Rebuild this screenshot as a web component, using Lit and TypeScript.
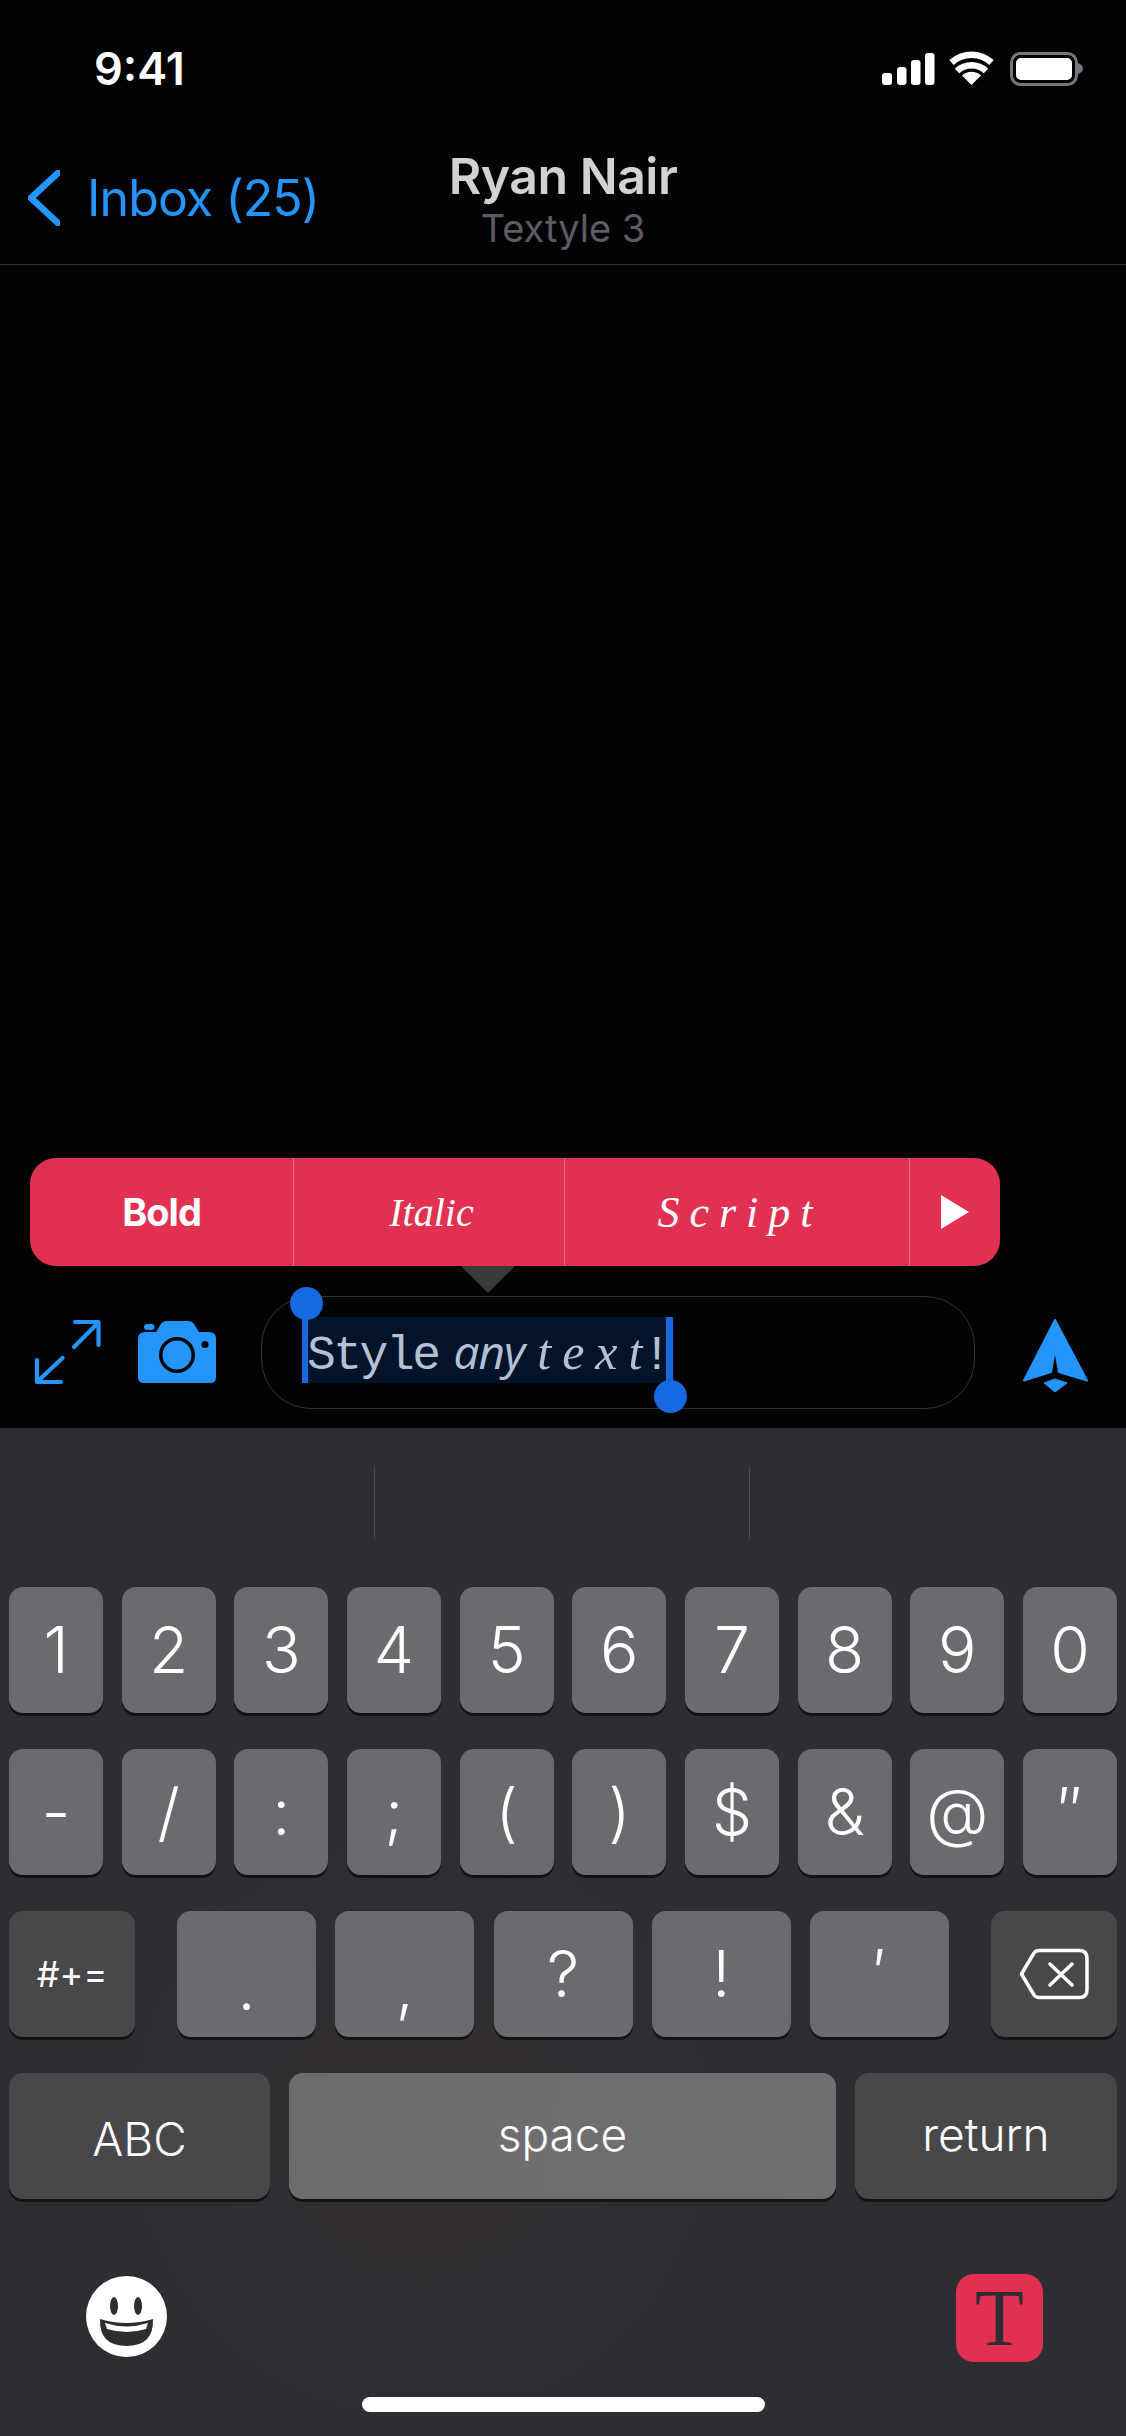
import { LitElement, html, css, svg } from "lit";
import { customElement } from "lit/decorators.js";

const rows1 = ["1","2","3","4","5","6","7","8","9","0"];
const rows2 = ["-","/",":",";","(",")","$","&","@","\u2033"];
const rows3 = [".",",","?","!","\u2032"];

@customElement("app-root")
export class AppRoot extends LitElement {
  static styles = css`
    :host { display: block; width: 1126px; height: 2436px; background: #030306; overflow: hidden; font-family: Inter, "Liberation Sans", sans-serif; color: #fff; }
    .page { display: flex; flex-direction: column; height: 2436px; }
    .status { height: 140px; flex: none; display: flex; justify-content: space-between; align-items: flex-start; padding: 0 43px 0 94px; box-sizing: border-box; }
    .time { font-size: 45px; font-weight: 600; line-height: 44px; margin-top: 47px; }
    .status svg { display: block; margin-top: 51px; }
    .nav { height: 125px; flex: none; box-sizing: border-box; border-bottom: 1px solid #2e2e31; display: grid; grid-template-columns: 1fr auto 1fr; }
    .back { display: flex; align-items: flex-start; color: #2395fb; font-size: 50px; line-height: 60px; padding: 28px 0 0 28px; gap: 27px; letter-spacing: -0.9px; }
    .back svg { display: block; margin-top: 2px; }
    .title { text-align: center; }
    .name { font-size: 50px; font-weight: 600; line-height: 60px; color: #d2d2d4; margin-top: 6px; letter-spacing: -0.5px; }
    .sub { font-size: 38px; line-height: 46px; color: #5d5d61; margin-top: -1px; }
    .thread { flex: 1; }
    .pop { position: relative; flex: none; margin-left: 30px; width: 970px; height: 108px; border-radius: 26px; background: #e23052; display: flex; font-size: 38px; }
    .pop > div { display: flex; align-items: center; justify-content: center; border-left: 1px solid #ec6a82; box-sizing: border-box; flex: none; }
    .pop > div:first-child { border-left: 0; }
    .b { font-weight: 700; width: 263px; letter-spacing: -1px; }
    .i { width: 271px; font-style: italic; font-family: "Liberation Serif", serif; font-size: 40px; padding-left: 5px; }
    .s { width: 345px; font-style: italic; font-family: "Liberation Serif", serif; font-size: 44px; letter-spacing: 10px; font-weight: 400; padding-left: 6px; }
    .more { flex: 1 !important; }
    .tip { position: absolute; left: 431px; top: 108px; width: 0; height: 0; border-left: 27px solid transparent; border-right: 27px solid transparent; border-top: 27px solid #3a393c; }
    .composer { flex: none; height: 162px; position: relative; display: flex; align-items: flex-start; padding-top: 30px; box-sizing: border-box; }
    .tools { width: 261px; flex: none; height: 113px; }
    .input { position: relative; width: 714px; height: 113px; box-sizing: border-box; border: 1px solid #333336; border-radius: 50px; }
    .sel { position: absolute; left: 40px; top: 20px; height: 66px; width: 371px; background: #02132a; box-sizing: border-box; border-left: 6px solid #1669e0; border-right: 7px solid #1669e0; display: flex; align-items: baseline; color: #b3c1d4; font-size: 44px; line-height: 68px; white-space: nowrap; }
    .mono { font-family: "Liberation Mono", monospace; font-size: 48px; letter-spacing: -2.5px; margin-left: -1px; }
    .any { font-style: italic; font-family: "Open Sans", sans-serif; font-size: 46px; margin-left: 15px; font-weight: 500; letter-spacing: -1px; }
    .script { font-family: "Liberation Serif", serif; font-style: italic; font-size: 50px; letter-spacing: 11px; margin-left: 13px; font-weight: 400; }
    .last { letter-spacing: 0; }
    .bang { font-family: "Liberation Mono", monospace; font-size: 48px; }
    .knob { position: absolute; width: 33px; height: 33px; border-radius: 50%; background: #1669e0; }
    .k1 { left: 28px; top: -10px; }
    .k2 { left: 392px; top: 83px; }
    .stem { position: absolute; background: #1669e0; width: 6px; }
    .tools-svg { position: absolute; left: 0; top: 0; display: block; }
    .kb { flex: none; height: 1008px; background: radial-gradient(circle at 420px 700px, #352e30 0, #302e32 170px, #2e2d31 320px); display: flex; flex-direction: column; position: relative; }
    .sugg { height: 159px; flex: none; display: flex; justify-content: center; gap: 374px; padding: 39px 3px 0 0; box-sizing: border-box; }
    .sugg i { display: block; width: 1px; height: 72px; background: #4e4e51; }
    .row { display: flex; height: 126px; flex: none; margin-bottom: 36px; padding: 0 9px; justify-content: space-between; }
    .group { display: flex; gap: 19.25px; flex: none; }
    .key { height: 126px; border-radius: 14px; background: #6b6a6e; box-shadow: 0 3px 0 #131316; display: flex; align-items: center; justify-content: center; flex: none; font-weight: 350; font-size: 64px; line-height: 1; box-sizing: border-box; }
    .n { width: 94px; }
    .dark { background: #48474a; }
    .wide { width: 139px; }
    .syms { width: 126px; font-size: 36px; font-weight: 400; }
    .top { align-items: flex-start; padding-top: 30px; }
    .bot { align-items: flex-end; padding-bottom: 18px; }
    .row4 { margin-bottom: 0; }
    .abc { width: 261px; font-size: 46px; font-weight: 350; padding-top: 6px; }
    .space { width: 547px; font-size: 46px; font-weight: 350; background: linear-gradient(100deg, #6e6c6e, #6f6e70); padding-bottom: 4px; }
    .ret { width: 262px; font-size: 46px; font-weight: 350; padding-bottom: 4px; }
    .bottom { flex: none; display: flex; justify-content: space-between; align-items: flex-start; padding: 75px 83px 0 86px; height: 237px; box-sizing: border-box; }
    .t { width: 87px; height: 88px; background: #e23052; border-radius: 18px; color: #2e2d31; font-family: "Liberation Serif", serif; font-size: 80px; line-height: 88px; text-align: center; }
    .home { position: absolute; left: 362px; top: 969px; width: 403px; height: 15px; border-radius: 8px; background: #fff; }
  `;

  renderSignal() {
    return html`<svg width="202" height="36" viewBox="881 51 202 36">
      <g fill="#fff">
        <rect x="882" y="73" width="10" height="12" rx="3"/>
        <rect x="897" y="67" width="9.5" height="18" rx="3"/>
        <rect x="911" y="60" width="9.5" height="25" rx="3"/>
        <rect x="925" y="53" width="9.5" height="32" rx="3"/>
        <path d="M971.5 85 L962 75.5 A14 14 0 0 1 981 75.5 Z"/>
      </g>
      <g fill="none" stroke="#fff" stroke-width="6.5">
        <path d="M957 71 A21 21 0 0 1 986 71"/>
        <path d="M951.5 62.5 A29.5 29.5 0 0 1 991.5 62.5"/>
      </g>
      <rect x="1011.5" y="53.5" width="65" height="31" rx="9" fill="none" stroke="#77767a" stroke-width="3"/>
      <rect x="1016" y="58" width="56" height="22" rx="5" fill="#fff"/>
      <path d="M1078 63 Q1083 65 1083 68.5 Q1083 72 1078 74 Z" fill="#77767a"/>
    </svg>`;
  }

  renderTools() {
    return svg`
      <g fill="none" stroke="#2395fb" stroke-width="4.2" stroke-linecap="round" stroke-linejoin="round">
        <path d="M75 1322 H98.500 V1345"/><path d="M98 1323 L74 1347"/>
        <path d="M37 1360 V1382 H61"/><path d="M38 1381 L62.500 1358"/>
      </g>
      <path fill="#2395fb" fill-rule="evenodd" d="M145 1332 H156 L161 1324 Q163 1321 167 1321 H188 Q192 1321 194 1324 L199 1332 H209 Q216 1332 216 1339 V1377 Q216 1383 210 1383 H144 Q138 1383 138 1377 V1339 Q138 1332 145 1332 Z"/>
      <rect x="144" y="1324" width="10.500" height="6" rx="3" fill="#2395fb"/>
      <circle cx="177" cy="1355" r="16.250" fill="#2395fb" stroke="#030306" stroke-width="3.500"/>
      <circle cx="205" cy="1344.500" r="3.500" fill="#030306"/>
      <path fill="#2395fb" stroke="#2395fb" stroke-width="2" stroke-linejoin="round" d="M1055 1320 L1087 1380.500 L1059 1372 L1055 1349 L1051 1372 L1024 1380.500 Z"/>
      <path fill="#2395fb" stroke="#2395fb" stroke-width="1" stroke-linejoin="round" d="M1044 1383 L1055 1379 L1067 1383 L1055 1392 Z"/>
    `;
  }

  render() {
    return html`<div class="page">
      <div class="status"><div class="time">9:41</div>${this.renderSignal()}</div>
      <div class="nav">
        <div class="back">
          <svg width="32" height="56" viewBox="0 0 32 56"><path d="M30 3 L3 28 L30 53" fill="none" stroke="#2395fb" stroke-width="6.500" stroke-linecap="round" stroke-linejoin="round"/></svg>
          <span>Inbox (25)</span>
        </div>
        <div class="title"><div class="name">Ryan Nair</div><div class="sub">Textyle 3</div></div>
        <div></div>
      </div>
      <div class="thread"></div>
      <div class="pop">
        <div class="b">Bold</div><div class="i">Italic</div><div class="s">Script</div>
        <div class="more"><svg width="28" height="34" viewBox="0 0 28 34"><path d="M0 0 L28 17 L0 34 Z" fill="#fff"/></svg></div>
        <span class="tip"></span>
      </div>
      <div class="composer">
        <svg class="tools-svg" width="1126" height="162" viewBox="0 1266 1126 162">${this.renderTools()}</svg>
        <div class="tools"></div>
        <div class="input">
          <div class="sel"><span class="mono">Style</span><span class="any">any</span><span class="script">tex<span class="last">t</span></span><span class="bang">!</span></div>
          <span class="stem" style="left:40px;top:10px;height:20px"></span>
          <span class="stem" style="left:405px;top:80px;height:20px"></span>
          <span class="knob k1"></span><span class="knob k2"></span>
        </div>
      </div>
      <div class="kb">
        <div class="sugg"><i></i><i></i></div>
        <div class="row">${rows1.map(k => html`<div class="key n">${k}</div>`)}</div>
        <div class="row">${rows2.map((k,i) => html`<div class="key n ${i===9?'top':''}">${k}</div>`)}</div>
        <div class="row">
          <div class="key dark syms">#+=</div>
          <div class="group">${rows3.map((k,i) => html`<div class="key wide ${i<2?'bot':i===4?'top':''}">${k}</div>`)}</div>
          <div class="key dark syms"><svg width="70" height="52" viewBox="0 0 70 52"><path d="M20 2.500 H60 Q68 2.500 68 10 V42 Q68 49.500 60 49.500 H20 Q17 49.500 15 47 L2.500 26 L15 5 Q17 2.500 20 2.500 Z M31 16 L53 37 M53 16 L31 37" fill="none" stroke="#fff" stroke-width="3.500" stroke-linejoin="round" stroke-linecap="round"/></svg></div>
        </div>
        <div class="row row4">
          <div class="key dark abc">ABC</div>
          <div class="key space">space</div>
          <div class="key dark ret">return</div>
        </div>
        <div class="bottom">
          <svg width="81" height="81" viewBox="0 0 81 81" style="margin-top:2px">
            <circle cx="40.500" cy="40.500" r="40.500" fill="#fff"/>
            <ellipse cx="28" cy="30" rx="4" ry="9" fill="#2e2d31"/><ellipse cx="52" cy="30" rx="4" ry="9" fill="#2e2d31"/>
            <path d="M14 43 Q40.500 51 67 43 Q68 70 40.500 70 Q13 70 14 43 Z" fill="#2e2d31"/>
            <path d="M19 47 Q40.500 54 62 47 L60 53 Q40.500 59 21 53 Z" fill="#fff"/>
          </svg>
          <div class="t">T</div>
        </div>
        <div class="home"></div>
      </div>
    </div>`;
  }
}
